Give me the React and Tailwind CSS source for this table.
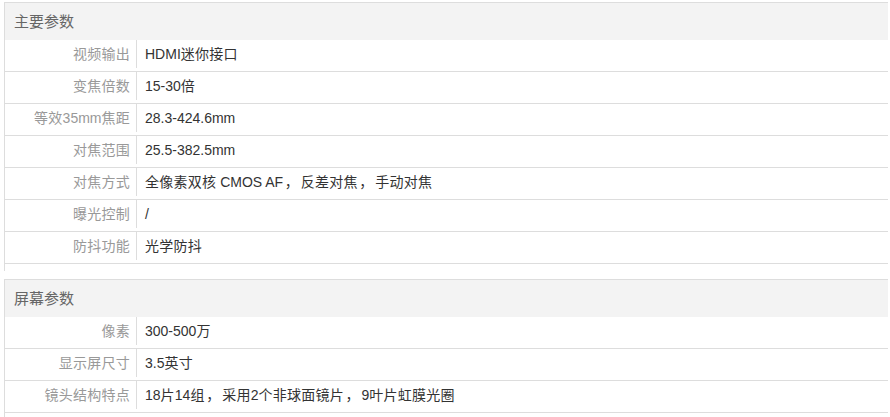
import React from "react";

const sections = [
  {
    title: "主要参数",
    rows: [
      ["视频输出", "HDMI迷你接口"],
      ["变焦倍数", "15-30倍"],
      ["等效35mm焦距", "28.3-424.6mm"],
      ["对焦范围", "25.5-382.5mm"],
      ["对焦方式", "全像素双核 CMOS AF，反差对焦，手动对焦"],
      ["曝光控制", "/"],
      ["防抖功能", "光学防抖"],
    ],
  },
  {
    title: "屏幕参数",
    rows: [
      ["像素", "300-500万"],
      ["显示屏尺寸", "3.5英寸"],
      ["镜头结构特点", "18片14组，采用2个非球面镜片，9叶片虹膜光圈"],
    ],
  },
];

function Txt({ text }) {
  const parts = text.split(/(，|[\u4e00-\u9fff]+)/).filter((p) => p !== "");
  return parts.map((p, i) => {
    if (p === "，") {
      return (
        <span key={i} className="pl-[1.5px] pr-[2px]">
          {p}
        </span>
      );
    }
    if (/[\u4e00-\u9fff]/.test(p)) {
      return (
        <span key={i} className="tracking-[0.25px]">
          {p}
        </span>
      );
    }
    return <span key={i}>{p}</span>;
  });
}

export default function App() {
  return (
    <div
      className="w-[890px] h-[417px] overflow-hidden bg-white pt-[2px] pl-[4px] text-[14px]"
      style={{ fontFamily: '"Liberation Sans", "Noto Sans CJK SC", sans-serif' }}
    >
      {sections.map((s, i) => (
        <div
          key={i}
          className="w-[884px] border-l border-t border-[#dddddd] pb-[7px] mb-[8px]"
        >
          <div className="h-[37px] bg-[#f3f3f3] pl-[9px] leading-[37px] text-[15px] text-[#666666]">
            {s.title}
          </div>
          {s.rows.map(([k, v], j) => (
            <div key={j} className="flex items-start h-[32px] border-b border-[#dddddd]">
              <div className="w-[132px] h-[28px] leading-[28px] border-r border-[#dddddd] text-right pr-[6px] text-[#999999] whitespace-nowrap">
                <Txt text={k} />
              </div>
              <div className="pl-[8px] leading-[28px] text-[#333333] whitespace-nowrap">
                <Txt text={v} />
              </div>
            </div>
          ))}
        </div>
      ))}
    </div>
  );
}
